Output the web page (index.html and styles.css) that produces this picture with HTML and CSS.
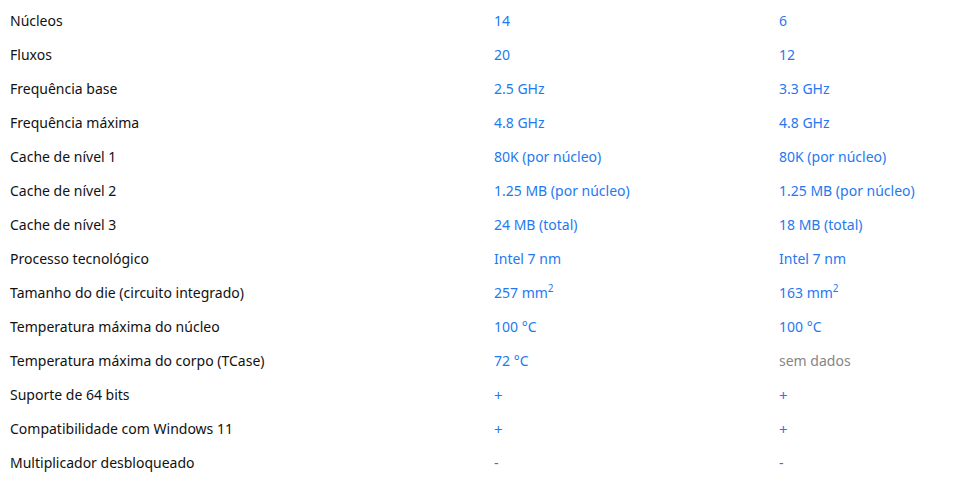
FILE: index.html
```html
<!DOCTYPE html>
<html lang="pt">
<head>
<meta charset="utf-8">
<link rel="stylesheet" href="styles.css">
</head>
<body>
<table class="specs">
  <tbody>
    <tr><td class="label">Núcleos</td><td class="val">14</td><td class="val">6</td></tr>
    <tr><td class="label">Fluxos</td><td class="val">20</td><td class="val">12</td></tr>
    <tr><td class="label">Frequência base</td><td class="val">2.5 GHz</td><td class="val">3.3 GHz</td></tr>
    <tr><td class="label">Frequência máxima</td><td class="val">4.8 GHz</td><td class="val">4.8 GHz</td></tr>
    <tr><td class="label">Cache de nível 1</td><td class="val">80K (por núcleo)</td><td class="val">80K (por núcleo)</td></tr>
    <tr><td class="label">Cache de nível 2</td><td class="val">1.25 MB (por núcleo)</td><td class="val">1.25 MB (por núcleo)</td></tr>
    <tr><td class="label">Cache de nível 3</td><td class="val">24 MB (total)</td><td class="val">18 MB (total)</td></tr>
    <tr><td class="label">Processo tecnológico</td><td class="val">Intel 7 nm</td><td class="val">Intel 7 nm</td></tr>
    <tr><td class="label">Tamanho do die (circuito integrado)</td><td class="val">257 mm<sup>2</sup></td><td class="val">163 mm<sup>2</sup></td></tr>
    <tr><td class="label">Temperatura máxima do núcleo</td><td class="val">100 °C</td><td class="val">100 °C</td></tr>
    <tr><td class="label">Temperatura máxima do corpo (TCase)</td><td class="val">72 °C</td><td class="val muted">sem dados</td></tr>
    <tr><td class="label">Suporte de 64 bits</td><td class="val sign">+</td><td class="val sign">+</td></tr>
    <tr><td class="label">Compatibilidade com Windows 11</td><td class="val sign">+</td><td class="val sign">+</td></tr>
    <tr><td class="label">Multiplicador desbloqueado</td><td class="val">-</td><td class="val">-</td></tr>
  </tbody>
</table>
</body>
</html>
```

FILE: styles.css
```css
html, body {
  margin: 0;
  padding: 0;
  background: #ffffff;
}
body {
  font-family: "Noto Sans", "Open Sans", sans-serif;
  font-size: 14px;
  color: #111111;
  padding-top: 4px;
}
.specs {
  width: 973px;
  border-collapse: collapse;
  table-layout: fixed;
}
.specs td {
  padding: 7px 0 7px 10px;
  line-height: 20px;
  white-space: nowrap;
  vertical-align: middle;
}
.specs td.label {
  width: 474px;
}
.specs td.val:nth-child(2) {
  width: 275px;
}
.val {
  color: #2479f2;
}
.val.sign {
  font-size: 15px;
}
.val.muted {
  color: #858585;
}
sup {
  font-size: 10px;
  line-height: 0;
  vertical-align: 6px;
}
```
